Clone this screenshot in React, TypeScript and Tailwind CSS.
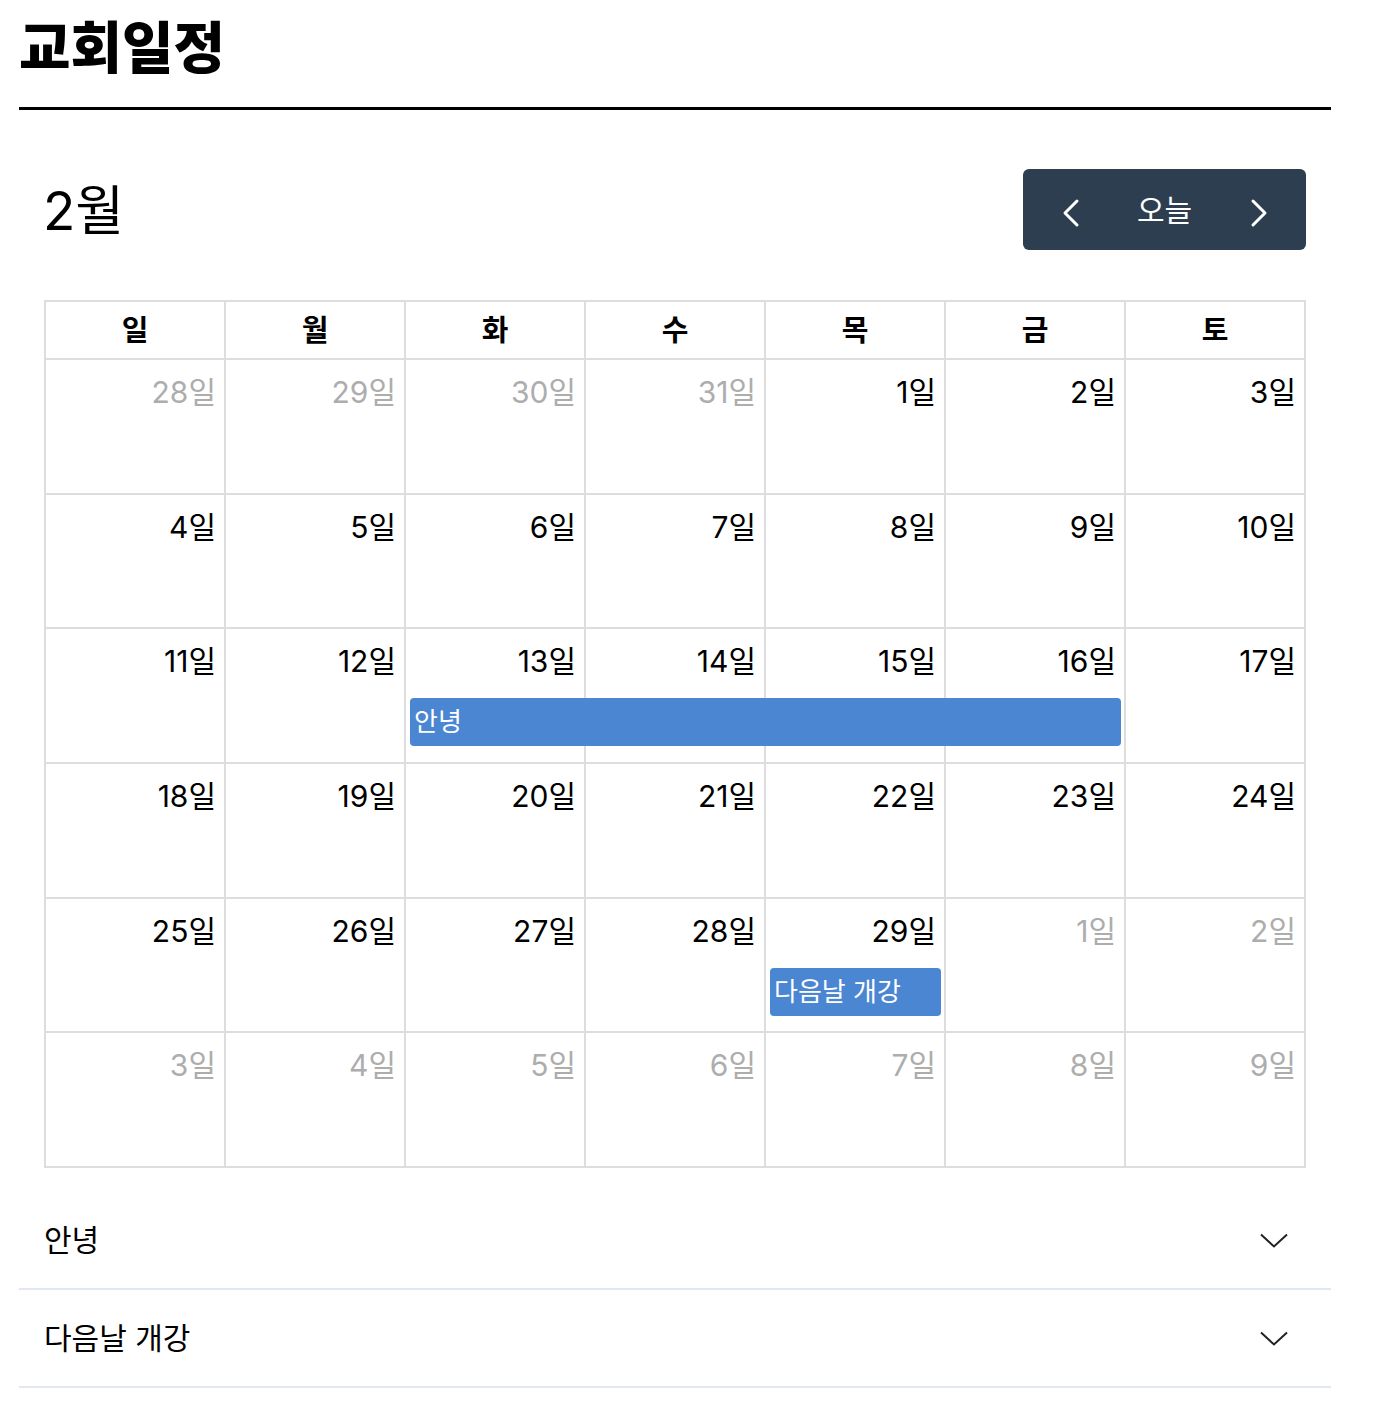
import React from "react";

const COLS = ["col-start-1", "col-start-2", "col-start-3", "col-start-4", "col-start-5", "col-start-6", "col-start-7"];

type Day = { n: number; other?: boolean };

const weeks: Day[][] = [
  [{ n: 28, other: true }, { n: 29, other: true }, { n: 30, other: true }, { n: 31, other: true }, { n: 1 }, { n: 2 }, { n: 3 }],
  [4, 5, 6, 7, 8, 9, 10].map((n) => ({ n })),
  [11, 12, 13, 14, 15, 16, 17].map((n) => ({ n })),
  [18, 19, 20, 21, 22, 23, 24].map((n) => ({ n })),
  [{ n: 25 }, { n: 26 }, { n: 27 }, { n: 28 }, { n: 29 }, { n: 1, other: true }, { n: 2, other: true }],
  [3, 4, 5, 6, 7, 8, 9].map((n) => ({ n, other: true })),
];

const dayNames = ["일", "월", "화", "수", "목", "금", "토"];

function Chevron({ dir }: { dir: "left" | "right" }) {
  return (
    <svg width="18" height="30" viewBox="0 0 18 30" fill="none" className="mt-[6px]">
      <polyline
        points={dir === "left" ? "15,3 3,15 15,27" : "3,3 15,15 3,27"}
        stroke="white"
        strokeWidth="3"
        strokeLinecap="round"
        strokeLinejoin="round"
      />
    </svg>
  );
}

function ChevronDown() {
  return (
    <svg width="28" height="15" viewBox="0 0 28 15" fill="none">
      <polyline points="1,1.5 14,13.5 27,1.5" stroke="#222" strokeWidth="2" />
    </svg>
  );
}

export default function App() {
  return (
    <div className="font-['Inter','Noto_Sans_CJK_KR',sans-serif] text-black bg-white min-h-[1404px] pl-[19px]">
      <div className="w-[1312px]">
        <div className="h-[110px] pt-[13px] border-b-[3px] border-black">
          <h1 className="text-[56px] leading-[70px] font-black">교회일정</h1>
        </div>

        <div className="px-[25px]">
          <div className="mt-[59px] flex items-center justify-between">
            <div className="text-[53px] leading-[60px] font-normal -ml-[1px] pt-[2px]">2월</div>
            <div className="h-[81px] w-[283px] rounded-[6px] bg-[#2c3e50] grid grid-cols-3 items-center text-white">
              <div className="flex justify-center pl-[1px]">
                <Chevron dir="left" />
              </div>
              <div className="text-center text-[30px] leading-[40px]">오늘</div>
              <div className="flex justify-center">
                <Chevron dir="right" />
              </div>
            </div>
          </div>

          <div className="mt-[50px] border-l-2 border-t-2 border-[#ddd]">
            <div className="grid grid-cols-7">
              {dayNames.map((d) => (
                <div
                  key={d}
                  className="h-[58px] pt-[2px] border-r-2 border-b-2 border-[#ddd] flex items-center justify-center text-[29px] font-bold"
                >
                  {d}
                </div>
              ))}
            </div>
            <div className="grid grid-rows-6 h-[808px]">
              {weeks.map((week, wi) => (
                <div key={wi} className="grid grid-cols-7 grid-rows-[69px_48px_1fr]">
                  {week.map((day, di) => (
                    <div
                      key={"c" + di}
                      className={`${COLS[di]} row-start-1 row-span-3 border-r-2 border-b-2 border-[#ddd]`}
                    />
                  ))}
                  {week.map((day, di) => (
                    <div
                      key={"n" + di}
                      className={`${COLS[di]} row-start-1 text-right pr-[10px] pt-[12px] text-[30px] leading-[40px] ${
                        day.other ? "text-[#adadad]" : "text-black"
                      }`}
                    >
                      {day.n}일
                    </div>
                  ))}
                  {wi === 2 && (
                    <div className="col-start-3 col-span-4 row-start-2 ml-[4px] mr-[5px] rounded-[4px] bg-[#4a86d2] text-white text-[26px] leading-[48px] pl-[4px]">
                      안녕
                    </div>
                  )}
                  {wi === 4 && (
                    <div className="col-start-5 col-span-1 row-start-2 ml-[4px] mr-[5px] rounded-[4px] bg-[#4a86d2] text-white text-[26px] leading-[48px] pl-[4px] whitespace-nowrap overflow-hidden">
                      다음날 개강
                    </div>
                  )}
                </div>
              ))}
            </div>
          </div>
        </div>

        <div className="mt-[24px]">
          {["안녕", "다음날 개강"].map((t) => (
            <div
              key={t}
              className="h-[98px] border-b-2 border-[#e2e8f0] flex items-center justify-between pl-[25px] pr-[43px]"
            >
              <span className="text-[30px] leading-[40px]">{t}</span>
              <ChevronDown />
            </div>
          ))}
        </div>
      </div>
    </div>
  );
}
